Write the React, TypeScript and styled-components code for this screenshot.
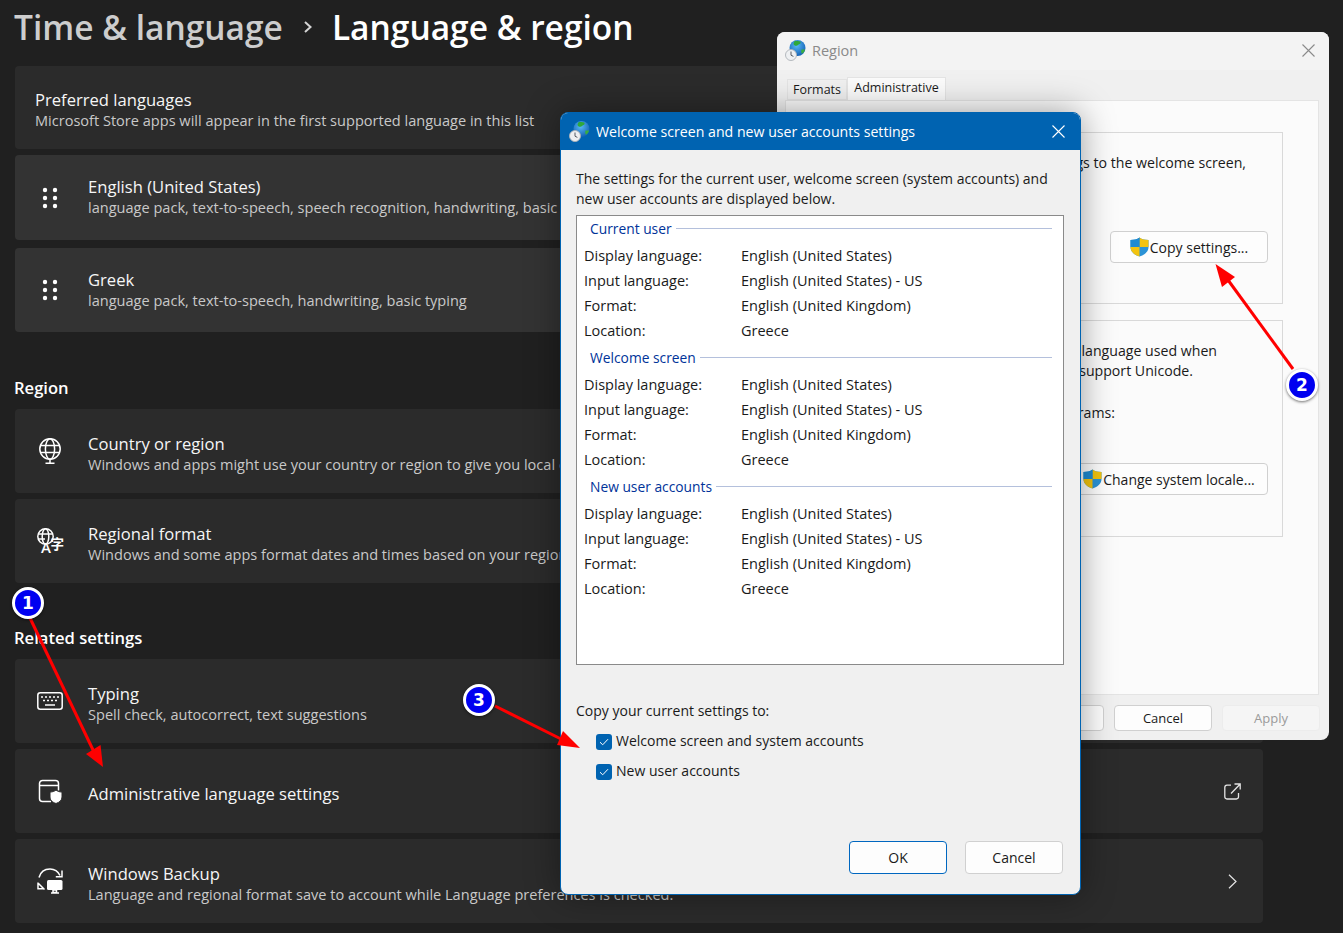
import React from "react";
import styled, { createGlobalStyle } from "styled-components";

const uiFont = `"Open Sans", "Noto Sans", "Liberation Sans", sans-serif`;

const GlobalStyle = createGlobalStyle`
  html, body {
    margin: 0;
    background: #202020;
    font-family: ${uiFont};
  }
  * {
    box-sizing: border-box;
  }
`;

const GlobeClock: React.FC<{ id: string }> = ({ id }) => (
  <svg width="21" height="21" viewBox="0 0 21 21" aria-hidden="true">
    <defs>
      <radialGradient id={id} cx="0.45" cy="0.35" r="0.75">
        <stop offset="0" stopColor="#58b8f5" />
        <stop offset="1" stopColor="#0a55ad" />
      </radialGradient>
    </defs>
    <circle cx="12.500" cy="8" r="8" fill={`url(#${id})`} />
    <path d="M10 .8c1.800.5 3.500.2 5.200.6.800 1 .4 2.300-.8 2.700-1.300.4-1.500 1.500-2.900 1.700C10 6 9 5 8.500 4c.1-1.300.6-2.400 1.500-3.200z" fill="#2fa83a" />
    <path d="M16.500 9.500c1-.3 2.400.1 3.600.1-.4 1.800-1.600 3.300-3.200 4.100-.7-1-.9-2.800-.4-4.200z" fill="#3aad3f" />
    <circle cx="6" cy="15" r="5.500" fill="#eef0f2" stroke="#aeb2b8" strokeWidth="0.900" />
    <path d="M6 11.500v3.700l2.400 1.200" fill="none" stroke="#555b63" strokeWidth="1" />
  </svg>
);

const Shield: React.FC = () => (
  <svg width="19" height="20" viewBox="0 0 19 20" aria-hidden="true">
    <path d="M9.500.5C12 2.300 15 3 18.500 3v7c0 4.500-3.600 7.800-9 9.500-5.400-1.700-9-5-9-9.500V3C4 3 7 2.300 9.500.5z" fill="#2b93d6" />
    <path d="M9.500.5C12 2.300 15 3 18.500 3v7h-9z" fill="#f3c30f" />
    <path d="M.5 10h9v9.500C4.100 17.800.5 14.500.5 10z" fill="#f3c30f" />
    <path d="M9.500.5C7 2.300 4 3 .5 3v7h9z" fill="#1f8bd2" />
  </svg>
);

const Check: React.FC = () => (
  <svg width="10" height="8" viewBox="0 0 10 8" aria-hidden="true">
    <path d="M1 4.200l2.700 2.600L9 1.200" fill="none" stroke="#fff" strokeWidth="1" />
  </svg>
);

const CloseIcon: React.FC<{ color: string }> = ({ color }) => (
  <svg width="13" height="13" viewBox="0 0 13 13" aria-hidden="true">
    <path d="M.5.500l12 12M12.500.500l-12 12" stroke={color} strokeWidth="1.100" />
  </svg>
);

const DragDots: React.FC = () => (
  <svg width="16" height="22" viewBox="0 0 16 22" fill="#fff" aria-hidden="true">
    <circle cx="3" cy="3" r="2.200" />
    <circle cx="13" cy="3" r="2.200" />
    <circle cx="3" cy="11" r="2.200" />
    <circle cx="13" cy="11" r="2.200" />
    <circle cx="3" cy="19" r="2.200" />
    <circle cx="13" cy="19" r="2.200" />
  </svg>
);

const GlobeIcon: React.FC = () => (
  <svg width="24" height="26" viewBox="0 0 24 26" fill="none" stroke="#fff" strokeWidth="1.500" aria-hidden="true">
    <circle cx="12" cy="11" r="10.200" />
    <ellipse cx="12" cy="11" rx="4.600" ry="10.200" />
    <path d="M2.200 7.500h19.600M2.200 14.500h19.600M12 21v4M7.500 25.200h9" />
  </svg>
);

const FormatIcon: React.FC = () => (
  <svg width="27" height="27" viewBox="0 0 27 27" aria-hidden="true">
    <g fill="none" stroke="#fff" strokeWidth="1.500">
      <circle cx="8.500" cy="8.500" r="7.700" />
      <ellipse cx="8.500" cy="8.500" rx="3.300" ry="7.700" />
      <path d="M1 6h15M1 11h7" />
    </g>
    <text x="4" y="24.500" fill="#fff" fontSize="15" fontWeight="600" fontFamily={uiFont}>A</text>
    <text x="13.500" y="21" fill="#fff" fontSize="13.500" fontWeight="700" fontFamily={`"Noto Sans CJK SC", sans-serif`}>字</text>
  </svg>
);

const KeyboardIcon: React.FC = () => (
  <svg width="26" height="18" viewBox="0 0 26 18" fill="none" aria-hidden="true">
    <rect x="0.800" y="0.800" width="24.400" height="16.400" rx="2.500" stroke="#fff" strokeWidth="1.500" />
    <path d="M4 5h2M8 5h2M12 5h2M16 5h2M20 5h2M6 8.500h2M10 8.500h2M14 8.500h2M18 8.500h2M8 13h10" stroke="#fff" strokeWidth="1.700" />
  </svg>
);

const AdminIcon: React.FC = () => (
  <svg width="25" height="25" viewBox="0 0 25 25" fill="none" aria-hidden="true">
    <path d="M13 22.500H4.500A3 3 0 0 1 1.500 19.500V4.500a3 3 0 0 1 3-3h13a3 3 0 0 1 3 3v7" stroke="#fff" strokeWidth="1.500" />
    <path d="M1.500 6.500h19" stroke="#fff" strokeWidth="1.500" />
    <path d="M18 11c1.500 1.300 3.300 2 6 2v5c0 3.200-2.300 5.200-6 6.500-3.700-1.300-6-3.300-6-6.500v-5c2.700 0 4.500-.7 6-2z" fill="#fff" stroke="#2b2b2b" strokeWidth="1" />
  </svg>
);

const BackupIcon: React.FC = () => (
  <svg width="26" height="26" viewBox="0 0 26 26" fill="none" aria-hidden="true">
    <path d="M2 9.500C3.500 4 8 1 13 1c4.500 0 8 2.300 10 6.500" stroke="#fff" strokeWidth="1.500" />
    <path d="M25 2.500v6.200h-6.200" stroke="#fff" strokeWidth="1.500" />
    <path d="M1 14.500v6.300h6.200M1.500 15.500l6 6" stroke="#fff" strokeWidth="1.500" />
    <rect x="10" y="12" width="15.500" height="10" rx="1.500" fill="#fff" />
    <path d="M16 22h3.500v2.500H16zM14 25h8" stroke="#fff" strokeWidth="1.500" />
  </svg>
);

const ExternalIcon: React.FC = () => (
  <svg width="17" height="17" viewBox="0 0 17 17" fill="none" stroke="#e4e4e4" strokeWidth="1.300" aria-hidden="true">
    <path d="M7 2.200H3A2.300 2.300 0 0 0 .8 4.500v9.300A2.300 2.300 0 0 0 3 16h9.300a2.300 2.300 0 0 0 2.200-2.200V10M7 10.500 16 1.200M10.500 1h5.700v5.500" />
  </svg>
);

const ChevronIcon: React.FC = () => (
  <svg width="9" height="15" viewBox="0 0 9 15" fill="none" stroke="#e4e4e4" strokeWidth="1.200" aria-hidden="true">
    <path d="M1 .800l7 6.700-7 6.700" />
  </svg>
);

const BreadcrumbChevron: React.FC = () => (
  <svg width="10" height="14" viewBox="0 0 10 14" fill="none" stroke="#d4d4d4" strokeWidth="2" aria-hidden="true">
    <path d="M2 2l5.500 5L2 12" />
  </svg>
);

const Page = styled.div`
  position: relative;
  width: 1343px;
  height: 933px;
  overflow: hidden;
  background: #202020;
  padding: 0 80px 0 15px;
`;

const Header = styled.h1`
  display: flex;
  align-items: center;
  height: 53px;
  margin: 0 0 13px -1px;
  font-size: 33.500px;
  font-weight: 600;
  white-space: nowrap;
`;

const Crumb = styled.span<{ $active?: boolean }>`
  color: ${(p) => (p.$active ? "#ffffff" : "#cdcdcd")};
`;

const CrumbSep = styled.span`
  display: flex;
  margin: 0 19px 0 20px;
`;

const SectionTitle = styled.h2<{ $top: number }>`
  height: 30px;
  margin: ${(p) => p.$top}px 0 6px -1px;
  color: #fff;
  font-size: 16.600px;
  font-weight: 600;
  line-height: 30px;
`;

const Card = styled.div<{ $height?: number; $gap?: number; $raised?: boolean }>`
  display: flex;
  align-items: center;
  height: ${(p) => p.$height ?? 84}px;
  margin-bottom: ${(p) => p.$gap ?? 6}px;
  padding-right: 22px;
  border-radius: 4px;
  background: ${(p) => (p.$raised ? "#333333" : "#2b2b2b")};
  white-space: nowrap;
`;

const IconSlot = styled.div`
  display: flex;
  flex: none;
  justify-content: center;
  width: 73px;
  padding-right: 3px;
`;

const TrailSlot = styled.div`
  display: flex;
  flex: none;
  justify-content: center;
  width: 17px;
`;

const CardText = styled.div<{ $inset?: boolean; $top?: number; $bottom?: number }>`
  flex: 1;
  min-width: 0;
  padding-top: ${(p) => p.$top ?? 5}px;
  padding-bottom: ${(p) => p.$bottom ?? 0}px;
  padding-left: ${(p) => (p.$inset ? 20 : 0)}px;
`;

const CardTitle = styled.div`
  color: #f6f6f6;
  font-size: 16.600px;
  line-height: 21px;
`;

const CardSub = styled.div`
  color: #c9c9c9;
  font-size: 14.550px;
  line-height: 20px;
`;

const Window = styled.section`
  position: absolute;
  top: 32px;
  left: 777px;
  display: flex;
  flex-direction: column;
  width: 552px;
  height: 708px;
  border-radius: 8px;
  overflow: hidden;
  background: #f0f0f0;
`;

const RegionTitleBar = styled.div`
  display: flex;
  flex: none;
  align-items: center;
  gap: 6px;
  height: 38px;
  padding: 0 14px 2px 8px;
  background: #f3f3f3;
  color: #8a8a8a;
  font-size: 14.500px;
`;

const TitleText = styled.span`
  flex: 1;
`;

const Tabs = styled.div`
  display: flex;
  flex: none;
  align-items: flex-end;
  height: 30px;
  padding-left: 10px;
`;

const Tab = styled.div<{ $active?: boolean }>`
  display: flex;
  align-items: ${(p) => (p.$active ? "flex-start" : "center")};
  justify-content: center;
  width: ${(p) => (p.$active ? 99 : 60)}px;
  height: ${(p) => (p.$active ? 24 : 21)}px;
  margin-bottom: ${(p) => (p.$active ? -1 : 0)}px;
  border: 1px solid #e4e4e4;
  border-bottom: ${(p) => (p.$active ? "none" : "1px solid #e4e4e4")};
  background: ${(p) => (p.$active ? "#fbfbfb" : "#f0f0f0")};
  color: #1a1a1a;
  font-size: 12.500px;
  line-height: 20px;
`;

const TabPanel = styled.div`
  display: flex;
  flex: none;
  flex-direction: column;
  gap: 16px;
  width: 534px;
  height: 595px;
  margin-left: 8px;
  padding: 31px 35px 0 12px;
  border: 1px solid #e4e4e4;
  background: #fbfbfb;
`;

const GroupBox = styled.div<{ $height: number }>`
  position: relative;
  display: flex;
  flex-direction: column;
  height: ${(p) => p.$height}px;
  border: 1px solid #d9d9d9;
  padding-right: 14px;
`;

const GroupLine = styled.div<{ $end: number; $top: number }>`
  margin-top: ${(p) => p.$top}px;
  padding-right: ${(p) => p.$end}px;
  color: #1a1a1a;
  font-size: 14.150px;
  line-height: 20px;
  text-align: right;
  white-space: nowrap;
`;

const ShieldButton = styled.button<{ $width: number; $top: number }>`
  display: flex;
  align-items: center;
  justify-content: center;
  gap: 1px;
  align-self: flex-end;
  width: ${(p) => p.$width}px;
  height: 32px;
  margin-top: ${(p) => p.$top}px;
  padding: 0;
  border: 1px solid #d0d0d0;
  border-radius: 4px;
  background: #fdfdfd;
  color: #1a1a1a;
  font-family: inherit;
  font-size: 14px;
`;

const RegionFooter = styled.div`
  display: flex;
  flex: none;
  justify-content: flex-end;
  gap: 10px;
  margin-top: 10px;
  padding-right: 9px;
`;

const RegionButton = styled.button<{ $disabled?: boolean }>`
  width: 98px;
  height: 26px;
  padding: 0;
  border: 1px solid ${(p) => (p.$disabled ? "#ececec" : "#d0d0d0")};
  border-radius: 4px;
  background: ${(p) => (p.$disabled ? "#f5f5f5" : "#fdfdfd")};
  color: ${(p) => (p.$disabled ? "#9a9a9a" : "#1a1a1a")};
  font-family: inherit;
  font-size: 13px;
`;

const Dialog = styled.section`
  position: absolute;
  top: 112px;
  left: 560px;
  display: flex;
  flex-direction: column;
  width: 521px;
  height: 783px;
  border: 1px solid #0063b1;
  border-radius: 8px;
  overflow: hidden;
  background: #f0f0f0;
  box-shadow: 0 0 34px rgba(0, 0, 0, 0.38);
`;

const DialogTitleBar = styled.div`
  display: flex;
  flex: none;
  align-items: center;
  gap: 6px;
  height: 37px;
  padding: 0 15px 0 8px;
  background: #0063b1;
  color: #fff;
  font-size: 14.150px;
`;

const DialogBody = styled.div`
  display: flex;
  flex: 1;
  flex-direction: column;
  padding: 19px 17px 20px 15px;
  color: #1a1a1a;
  font-size: 14px;
`;

const Intro = styled.p`
  margin: 0 0 6px;
  line-height: 20px;
  white-space: nowrap;
`;

const SummaryBox = styled.div`
  flex: none;
  width: 488px;
  height: 450px;
  border: 1px solid #8a8a8a;
  background: #fff;
`;

const SummaryGroup = styled.div`
  margin-bottom: 2px;
`;

const Legend = styled.div`
  display: flex;
  align-items: center;
  gap: 4px;
  height: 25px;
  margin-bottom: 2px;
  padding: 0 11px 0 13px;
  color: #003399;
  font-size: 13.800px;
`;

const LegendRule = styled.span`
  flex: 1;
  height: 1px;
  background: #b4c0dc;
`;

const SummaryRow = styled.div`
  display: grid;
  grid-template-columns: 157px 1fr;
  height: 25px;
  padding-left: 7px;
  font-size: 14.500px;
  line-height: 25px;
  white-space: nowrap;
`;

const CopyLabel = styled.div`
  margin-top: 36px;
  line-height: 20px;
`;

const CheckRow = styled.label<{ $top: number }>`
  display: flex;
  align-items: center;
  gap: 4px;
  height: 20px;
  margin-top: ${(p) => p.$top}px;
  padding-left: 20px;
`;

const CheckBox = styled.span`
  display: flex;
  align-items: center;
  justify-content: center;
  width: 16px;
  height: 16px;
  margin-top: 3px;
  border-radius: 3px;
  background: #0063b1;
`;

const DialogFooter = styled.div`
  display: flex;
  justify-content: flex-end;
  gap: 18px;
  margin-top: auto;
`;

const DialogButton = styled.button<{ $primary?: boolean }>`
  width: 98px;
  height: 33px;
  padding: 0;
  border: 1px solid ${(p) => (p.$primary ? "#0067c0" : "#d0d0d0")};
  border-radius: 4px;
  background: #fdfdfd;
  color: #1a1a1a;
  font-family: inherit;
  font-size: 14px;
`;

const ArrowLayer = styled.svg`
  position: absolute;
  top: 0;
  left: 0;
  pointer-events: none;
`;

const Badge = styled.div<{ $x: number; $y: number }>`
  position: absolute;
  top: ${(p) => p.$y - 16}px;
  left: ${(p) => p.$x - 16}px;
  display: flex;
  align-items: center;
  justify-content: center;
  width: 32px;
  height: 32px;
  border: 3px solid #fff;
  border-radius: 50%;
  background: #0000f0;
  box-shadow: 0 1px 3px rgba(0, 0, 0, 0.55);
  color: #fff;
  font-family: "DejaVu Sans", sans-serif;
  font-size: 17px;
  font-weight: 700;
`;

const summaryGroups = ["Current user", "Welcome screen", "New user accounts"];

const App: React.FC = () => (
  <>
    <GlobalStyle />
    <Page>
      <Header>
        <Crumb>Time &amp; language</Crumb>
        <CrumbSep>
          <BreadcrumbChevron />
        </CrumbSep>
        <Crumb $active>Language &amp; region</Crumb>
      </Header>

      <Card $height={83}>
        <CardText $inset $top={3}>
          <CardTitle>Preferred languages</CardTitle>
          <CardSub>Microsoft Store apps will appear in the first supported language in this list</CardSub>
        </CardText>
      </Card>
      <Card $height={85} $gap={8} $raised>
        <IconSlot>
          <DragDots />
        </IconSlot>
        <CardText $top={0} $bottom={3}>
          <CardTitle>English (United States)</CardTitle>
          <CardSub>language pack, text-to-speech, speech recognition, handwriting, basic typing</CardSub>
        </CardText>
      </Card>
      <Card $gap={0} $raised>
        <IconSlot>
          <DragDots />
        </IconSlot>
        <CardText $top={0} $bottom={2}>
          <CardTitle>Greek</CardTitle>
          <CardSub>language pack, text-to-speech, handwriting, basic typing</CardSub>
        </CardText>
      </Card>

      <SectionTitle $top={41}>Region</SectionTitle>
      <Card>
        <IconSlot>
          <GlobeIcon />
        </IconSlot>
        <CardText>
          <CardTitle>Country or region</CardTitle>
          <CardSub>Windows and apps might use your country or region to give you local content</CardSub>
        </CardText>
      </Card>
      <Card $gap={0}>
        <IconSlot>
          <FormatIcon />
        </IconSlot>
        <CardText>
          <CardTitle>Regional format</CardTitle>
          <CardSub>Windows and some apps format dates and times based on your region</CardSub>
        </CardText>
      </Card>

      <SectionTitle $top={40}>Related settings</SectionTitle>
      <Card>
        <IconSlot>
          <KeyboardIcon />
        </IconSlot>
        <CardText>
          <CardTitle>Typing</CardTitle>
          <CardSub>Spell check, autocorrect, text suggestions</CardSub>
        </CardText>
      </Card>
      <Card>
        <IconSlot>
          <AdminIcon />
        </IconSlot>
        <CardText $top={4}>
          <CardTitle>Administrative language settings</CardTitle>
        </CardText>
        <TrailSlot>
          <ExternalIcon />
        </TrailSlot>
      </Card>
      <Card>
        <IconSlot>
          <BackupIcon />
        </IconSlot>
        <CardText>
          <CardTitle>Windows Backup</CardTitle>
          <CardSub>Language and regional format save to account while Language preferences is checked.</CardSub>
        </CardText>
        <TrailSlot>
          <ChevronIcon />
        </TrailSlot>
      </Card>

      <Window>
        <RegionTitleBar>
          <GlobeClock id="region-globe" />
          <TitleText>Region</TitleText>
          <CloseIcon color="#8a8a8a" />
        </RegionTitleBar>
        <Tabs>
          <Tab>Formats</Tab>
          <Tab $active>Administrative</Tab>
        </Tabs>
        <TabPanel>
          <GroupBox $height={172}>
            <GroupLine $end={22} $top={20}>
              View and copy your international settings to the welcome screen,
            </GroupLine>
            <ShieldButton $width={158} $top={58}>
              <Shield />
              Copy settings...
            </ShieldButton>
          </GroupBox>
          <GroupBox $height={217}>
            <GroupLine $end={51} $top={20}>
              This setting (system locale) controls the language used when
            </GroupLine>
            <GroupLine $end={75} $top={0}>
              text in software programs that do not support Unicode.
            </GroupLine>
            <GroupLine $end={153} $top={22}>
              Current language for non-Unicode programs:
            </GroupLine>
            <ShieldButton $width={198} $top={40}>
              <Shield />
              Change system locale...
            </ShieldButton>
          </GroupBox>
        </TabPanel>
        <RegionFooter>
          <RegionButton>OK</RegionButton>
          <RegionButton>Cancel</RegionButton>
          <RegionButton $disabled>Apply</RegionButton>
        </RegionFooter>
      </Window>

      <Dialog>
        <DialogTitleBar>
          <GlobeClock id="dialog-globe" />
          <TitleText>Welcome screen and new user accounts settings</TitleText>
          <CloseIcon color="#ffffff" />
        </DialogTitleBar>
        <DialogBody>
          <Intro>
            The settings for the current user, welcome screen (system accounts) and
            <br />
            new user accounts are displayed below.
          </Intro>
          <SummaryBox>
            {summaryGroups.map((title) => (
              <SummaryGroup key={title}>
                <Legend>
                  {title}
                  <LegendRule />
                </Legend>
                <SummaryRow>
                  <span>Display language:</span>
                  <span>English (United States)</span>
                </SummaryRow>
                <SummaryRow>
                  <span>Input language:</span>
                  <span>English (United States) - US</span>
                </SummaryRow>
                <SummaryRow>
                  <span>Format:</span>
                  <span>English (United Kingdom)</span>
                </SummaryRow>
                <SummaryRow>
                  <span>Location:</span>
                  <span>Greece</span>
                </SummaryRow>
              </SummaryGroup>
            ))}
          </SummaryBox>
          <CopyLabel>Copy your current settings to:</CopyLabel>
          <CheckRow $top={9}>
            <CheckBox>
              <Check />
            </CheckBox>
            Welcome screen and system accounts
          </CheckRow>
          <CheckRow $top={10}>
            <CheckBox>
              <Check />
            </CheckBox>
            New user accounts
          </CheckRow>
          <DialogFooter>
            <DialogButton $primary>OK</DialogButton>
            <DialogButton>Cancel</DialogButton>
          </DialogFooter>
        </DialogBody>
      </Dialog>

      <ArrowLayer width="1343" height="933" viewBox="0 0 1343 933" aria-hidden="true">
        <g stroke="#ff0000" strokeWidth="3" fill="#ff0000">
          <path d="M30 618 94 752" fill="none" />
          <path d="M103 767 86 754 100.500 745z" stroke="none" />
          <path d="M1293 369 1228 280" fill="none" />
          <path d="M1215.500 264 1235 277 1222 287z" stroke="none" />
          <path d="M495 706 565 741" fill="none" />
          <path d="M580 748 557 745 563 731z" stroke="none" />
        </g>
      </ArrowLayer>

      <Badge $x={28} $y={603}>1</Badge>
      <Badge $x={1302} $y={385}>2</Badge>
      <Badge $x={479} $y={700}>3</Badge>
    </Page>
  </>
);

export default App;
